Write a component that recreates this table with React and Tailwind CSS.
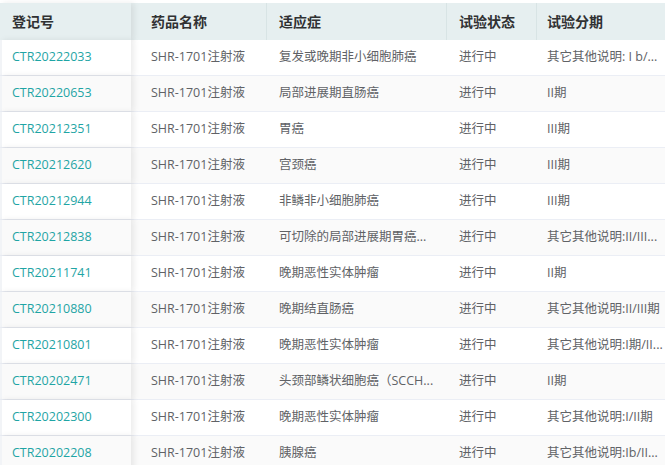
import React from 'react';

const rows = [
  ['CTR20222033', '复发或晚期非小细胞肺癌', '其它其他说明: I b/...'],
  ['CTR20220653', '局部进展期直肠癌', 'II期'],
  ['CTR20212351', '胃癌', 'III期'],
  ['CTR20212620', '宫颈癌', 'III期'],
  ['CTR20212944', '非鳞非小细胞肺癌', 'III期'],
  ['CTR20212838', '可切除的局部进展期胃癌...', '其它其他说明:II/III...'],
  ['CTR20211741', '晚期恶性实体肿瘤', 'II期'],
  ['CTR20210880', '晚期结直肠癌', '其它其他说明:II/III期'],
  ['CTR20210801', '晚期恶性实体肿瘤', '其它其他说明:I期/II...'],
  ['CTR20202471', '头颈部鳞状细胞癌（SCCH...', 'II期'],
  ['CTR20202300', '晚期恶性实体肿瘤', '其它其他说明:I/II期'],
  ['CTR20202208', '胰腺癌', '其它其他说明:Ib/II...'],
];

const font = { fontFamily: '"Open Sans", "Noto Sans CJK SC", sans-serif' };

export default function App() {
  return (
    <div className="w-[665px] h-[465px] overflow-hidden bg-white pt-[3px]" style={font}>
      {/* header */}
      <div className="flex h-[37px] bg-[#e6eff0] text-[14px] font-bold text-[#303133]">
        <div className="relative z-10 w-[131px] shrink-0 flex items-center pl-3 bg-[#e6eff0] shadow-[3px_0_6px_rgba(0,0,0,0.08)]">登记号</div>
        <div className="w-[136px] shrink-0 flex items-center pl-5 border-r border-[#d8e4e5]">药品名称</div>
        <div className="w-[180px] shrink-0 flex items-center pl-3 border-r border-[#d8e4e5]">适应症</div>
        <div className="w-[90px] shrink-0 flex items-center pl-3 border-r border-[#d8e4e5]">试验状态</div>
        <div className="flex-1 flex items-center pl-[10px]">试验分期</div>
      </div>
      {/* body */}
      {rows.map((r, i) => (
        <div
          key={r[0]}
          className={`flex h-[36px] text-[12.5px] text-[#606266] border-b border-[#ebeef5] ${i % 2 ? 'bg-[#fafafa]' : 'bg-white'}`}
        >
          <div
            className={`relative z-10 w-[131px] shrink-0 flex items-center pl-[10px] text-[#1fa5a5] border-l-2 border-[#f2f4f7] shadow-[3px_0_6px_rgba(0,0,0,0.08)] ${i % 2 ? 'bg-[#fafafa]' : 'bg-white'}`}
          >
            {r[0]}
          </div>
          <div className="w-[136px] shrink-0 flex items-center pl-5 whitespace-nowrap">SHR-1701注射液</div>
          <div className="w-[180px] shrink-0 flex items-center pl-3 whitespace-nowrap">{r[1]}</div>
          <div className="w-[90px] shrink-0 flex items-center pl-3">进行中</div>
          <div className="flex-1 flex items-center pl-[10px] whitespace-nowrap overflow-hidden">{r[2]}</div>
        </div>
      ))}
    </div>
  );
}
